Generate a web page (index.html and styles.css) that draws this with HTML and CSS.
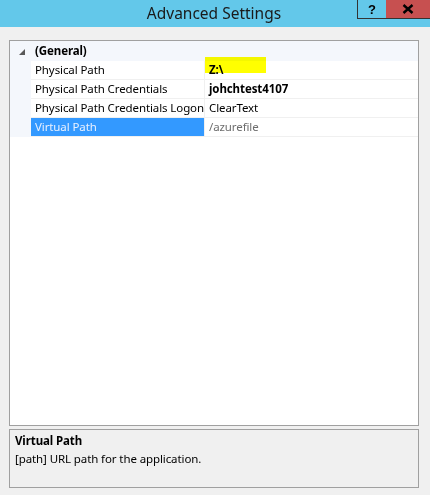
FILE: index.html
```html
<!DOCTYPE html>
<html>
<head>
<meta charset="utf-8">
<link rel="stylesheet" href="styles.css">
</head>
<body>
<div class="window">
  <div class="titlebar">
    <div class="title">Advanced Settings</div>
    <div class="buttons">
      <div class="btn help">?</div>
      <div class="btn close">
        <svg width="12" height="10" viewBox="0 0 12 10"><path d="M1.5 1 L10.5 9 M10.5 1 L1.5 9" stroke="#000" stroke-width="2.4"/></svg>
      </div>
    </div>
  </div>
  <div class="content">
    <div class="grid">
      <div class="row header">
        <div class="gutter"><svg class="tri" width="6" height="6" viewBox="0 0 6 6"><path d="M6 0 L6 6 L0 6 Z" fill="#595959"/></svg></div>
        <div class="cat">(General)</div>
      </div>
      <div class="row">
        <div class="gutter"></div>
        <div class="name">Physical Path</div>
        <div class="value bold">Z:\</div>
      </div>
      <div class="row">
        <div class="gutter"></div>
        <div class="name">Physical Path Credentials</div>
        <div class="value bold">johchtest4107</div>
      </div>
      <div class="row">
        <div class="gutter"></div>
        <div class="name">Physical Path Credentials Logon</div>
        <div class="value">ClearText</div>
      </div>
      <div class="row selected">
        <div class="gutter"></div>
        <div class="name">Virtual Path</div>
        <div class="value dim">/azurefile</div>
      </div>
      <div class="highlight"></div>
    </div>
    <div class="desc">
      <div class="desc-title">Virtual Path</div>
      <div class="desc-text">[path] URL path for the application.</div>
    </div>
  </div>
</div>
</body>
</html>
```
FILE: styles.css
```css
* { box-sizing: border-box; }
html, body { margin: 0; padding: 0; }
body {
  width: 430px;
  height: 495px;
  background: #f0f0f0;
  font-family: "Noto Sans", "Open Sans", sans-serif;
  font-size: 11.5px;
  letter-spacing: -0.1px;
  color: #000;
  overflow: hidden;
}
.window { display: flex; flex-direction: column; height: 495px; }
.titlebar {
  height: 27px;
  background: #63c8ea;
  position: relative;
  display: flex;
  justify-content: center;
  align-items: center;
  flex-shrink: 0;
}
.title {
  font-size: 15.5px;
  letter-spacing: 0;
  color: #1a1a1a;
  margin-left: -2px;
  margin-top: -1px;
}
.buttons {
  position: absolute;
  top: 0;
  right: 0;
  display: flex;
}
.btn {
  height: 19px;
  display: flex;
  align-items: center;
  justify-content: center;
}
.help {
  width: 29px;
  border: 1px solid #333;
  border-top: none;
  border-right: none;
  font-weight: bold;
  font-size: 13px;
  font-family: "Liberation Sans", sans-serif;
}
.close {
  width: 44px;
  background: #c75050;
  border-bottom: 1px solid #333;
}
.content {
  padding: 13px 11px 7px 9px;
  display: flex;
  flex-direction: column;
  gap: 3px;
  flex: 1;
}
.grid {
  position: relative;
  height: 386px;
  background: #fff;
  border: 1px solid #a0a0a0;
  display: flex;
  flex-direction: column;
}
.row {
  display: flex;
  height: 19px;
  line-height: 18px;
}
.gutter {
  width: 21px;
  background: #f4f7fc;
  display: flex;
  align-items: center;
  justify-content: flex-end;
  padding-right: 6px;
}
.tri { margin-top: 1px; }
.header { height: 20px; background: #f4f7fc; line-height: 20px; }
.cat { font-weight: bold; padding-left: 4px; }
.name {
  width: 174px;
  padding-left: 4px;
  border-bottom: 1px solid #f0f0f0;
  border-right: 1px solid #f0f0f0;
  white-space: nowrap;
  overflow: hidden;
}
.value {
  flex: 1;
  padding-left: 4px;
  border-bottom: 1px solid #f0f0f0;
  white-space: nowrap;
}
.bold { font-weight: bold; }
.dim { color: #6d6d6d; }
.selected .name { background: #3399ff; color: #e8f0ff; }
.highlight {
  position: absolute;
  left: 195px;
  top: 16px;
  width: 61px;
  height: 16px;
  background: #ffff00;
  mix-blend-mode: multiply;
}
.desc {
  height: 59px;
  border: 1px solid #a0a0a0;
  padding: 2px 5px;
  line-height: 18px;
}
.desc-title { font-weight: bold; }
```
